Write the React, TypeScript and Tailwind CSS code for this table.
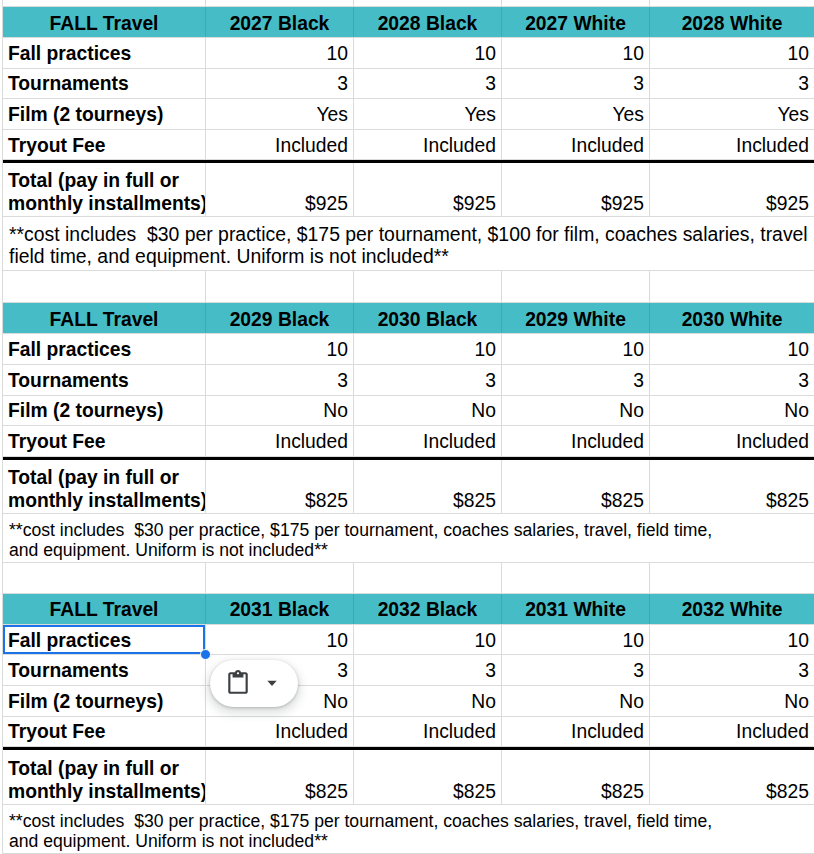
import type { ReactNode } from 'react'

// column widths: A holds the labels, B–D are fixed, E takes what is left
const COL_W = ['w-[203px]', 'w-[148px]', 'w-[148px]', 'w-[148px]', 'flex-1']
const GRID = 'border-[#dadcdc]'

type TableData = {
  teams: string[]
  film: string
  total: string
  note: string[]
  small?: boolean
  selected?: boolean
}

const TABLES: TableData[] = [
  {
    teams: ['2027 Black', '2028 Black', '2027 White', '2028 White'],
    film: 'Yes',
    total: '$925',
    note: [
      '**cost includes  $30 per practice, $175 per tournament, $100 for film, coaches salaries, travel',
      'field time, and equipment. Uniform is not included**',
    ],
  },
  {
    teams: ['2029 Black', '2030 Black', '2029 White', '2030 White'],
    film: 'No',
    total: '$825',
    note: [
      '**cost includes  $30 per practice, $175 per tournament, coaches salaries, travel, field time,',
      'and equipment. Uniform is not included**',
    ],
    small: true,
  },
  {
    teams: ['2031 Black', '2032 Black', '2031 White', '2032 White'],
    film: 'No',
    total: '$825',
    note: [
      '**cost includes  $30 per practice, $175 per tournament, coaches salaries, travel, field time,',
      'and equipment. Uniform is not included**',
    ],
    small: true,
    selected: true,
  },
]

function EmptyRow({ height }: { height: string }) {
  return (
    <div className={`flex border-b ${GRID} ${height}`}>
      {COL_W.map((w, i) => (
        <div key={i} className={`${w} ${i < 4 ? `border-r ${GRID}` : ''}`} />
      ))}
    </div>
  )
}

function PastePopup() {
  return (
    <div className="absolute left-[207px] top-[35px] z-20 flex h-[47px] w-[88px] items-center rounded-full bg-white pl-[15px] shadow-[0_1px_3px_rgba(60,64,67,0.3),0_4px_8px_3px_rgba(60,64,67,0.15)]">
      <svg width="26" height="26" viewBox="0 0 24 24" fill="#3c4043">
        <path d="M19 2h-4.18C14.4.84 13.3 0 12 0c-1.3 0-2.4.84-2.82 2H5c-1.1 0-2 .9-2 2v16c0 1.1.9 2 2 2h14c1.1 0 2-.9 2-2V4c0-1.1-.9-2-2-2zm-7 0c.55 0 1 .45 1 1s-.45 1-1 1-1-.45-1-1 .45-1 1-1zm7 18H5V4h2v3h10V4h2v16z" />
      </svg>
      <svg width="14" height="14" viewBox="0 0 24 24" fill="#3c4043" className="ml-[14px]">
        <path d="M4 8l8 9 8-9z" />
      </svg>
    </div>
  )
}

function DataRow({
  label,
  values,
  selected,
}: {
  label: string
  values: string[]
  selected?: boolean
}) {
  return (
    <div className={`flex h-[30.6px] border-b ${GRID}`}>
      <div className={`relative flex items-center border-r ${GRID} ${COL_W[0]} px-[5px] pt-[2px] font-bold`}>
        {label}
        {selected && (
          <>
            <div className="absolute inset-0 z-10 border-2 border-[#1a73e8]" />
            <div className="absolute -bottom-[6px] -right-[6px] z-10 h-[11px] w-[11px] rounded-full border border-white bg-[#1a73e8]" />
            <PastePopup />
          </>
        )}
      </div>
      {values.map((v, i) => (
        <div
          key={i}
          className={`flex items-center justify-end ${COL_W[i + 1]} ${i < 3 ? `border-r ${GRID}` : ''} px-[5px] pt-[2px]`}
        >
          {v}
        </div>
      ))}
    </div>
  )
}

function PriceTable({ t, gap }: { t: TableData; gap?: ReactNode }) {
  return (
    <div>
      <div className={`flex h-[31px] border-b ${GRID} bg-[#46bdc6] font-bold`}>
        <div className={`flex items-center justify-center border-r border-[#3fa9b1] ${COL_W[0]} pt-[3px]`}>
          FALL Travel
        </div>
        {t.teams.map((team, i) => (
          <div
            key={team}
            className={`flex items-center justify-center ${COL_W[i + 1]} ${i < 3 ? 'border-r border-[#3fa9b1]' : ''} pt-[3px]`}
          >
            {team}
          </div>
        ))}
      </div>

      <DataRow label="Fall practices" values={['10', '10', '10', '10']} selected={t.selected} />
      <DataRow label="Tournaments" values={['3', '3', '3', '3']} />
      <DataRow label="Film (2 tourneys)" values={[t.film, t.film, t.film, t.film]} />
      <DataRow label="Tryout Fee" values={['Included', 'Included', 'Included', 'Included']} />

      <div className="h-[3px] bg-black" />

      <div className={`flex ${t.selected ? 'h-[55px]' : 'h-[54px]'} border-b ${GRID} leading-[23px]`}>
        <div
          className={`flex flex-col justify-end overflow-hidden whitespace-nowrap border-r ${GRID} ${COL_W[0]} pb-[1px] pl-[5px] font-bold`}
        >
          <span>Total (pay in full or</span>
          <span>monthly installments)</span>
        </div>
        {t.teams.map((team, i) => (
          <div
            key={team}
            className={`flex items-end justify-end ${COL_W[i + 1]} ${i < 3 ? `border-r ${GRID}` : ''} pb-[1px] pr-[5px]`}
          >
            {t.total}
          </div>
        ))}
      </div>

      <div
        className={`flex flex-col justify-end overflow-hidden whitespace-pre border-b ${GRID} pl-[6px] ${
          t.small ? 'h-[49px] pb-[2px] text-[17.6px] leading-[20px]' : 'h-[54px] pb-[3px] text-[19.4px] leading-[22px]'
        }`}
      >
        {t.note.map((line) => (
          <span key={line}>{line}</span>
        ))}
      </div>

      {gap}
    </div>
  )
}

export default function App() {
  return (
    <div className="h-[854px] w-[814px] overflow-hidden bg-white pl-[2px] font-['Liberation_Sans',Arial,sans-serif] text-[19.3px] leading-[22px] text-black">
      <div className={`border-l ${GRID}`}>
        <EmptyRow height="h-[7px]" />
        <PriceTable t={TABLES[0]} gap={<EmptyRow height="h-[32px]" />} />
        <PriceTable t={TABLES[1]} gap={<EmptyRow height="h-[31px]" />} />
        <PriceTable t={TABLES[2]} />
      </div>
    </div>
  )
}
